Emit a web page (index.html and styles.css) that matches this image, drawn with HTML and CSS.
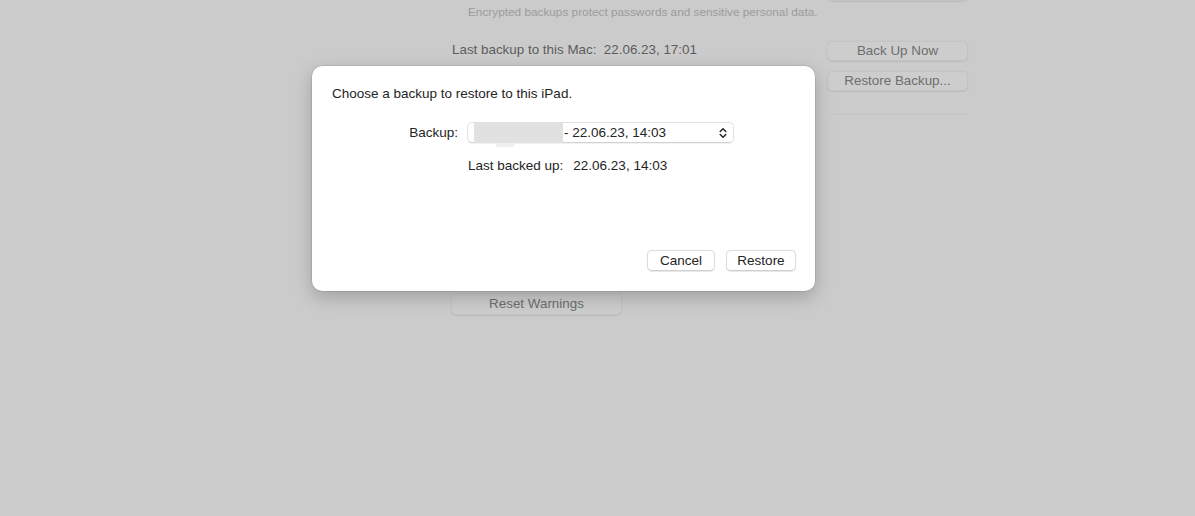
FILE: index.html
```html
<!DOCTYPE html>
<html>
<head>
<meta charset="utf-8">
<link rel="stylesheet" href="styles.css">
</head>
<body>
<div class="page">
  <div class="grid">
    <div class="cell"></div>
    <div class="cell"><div class="btn top-btn"></div></div>

    <div class="cell note">Encrypted backups protect passwords and sensitive personal data.</div>
    <div class="cell"></div>

    <div class="cell last">Last backup to this Mac:&nbsp; 22.06.23, 17:01</div>
    <div class="cell"><div class="btn gap">Back Up Now</div></div>

    <div class="cell"></div>
    <div class="cell"><div class="btn gap">Restore Backup...</div></div>

    <div class="cell"></div>
    <div class="cell"><div class="sep"></div></div>
  </div>
  <div class="reset-row"><div class="btn reset">Reset Warnings</div></div>
</div>

<div class="dialog">
  <p class="title">Choose a backup to restore to this iPad.</p>
  <div class="form">
    <span class="label">Backup:</span>
    <div class="popup">
      <span class="redact"><span class="redact-tail"></span></span>
      <span class="popup-text">- 22.06.23, 14:03</span>
      <svg class="chev" width="8" height="12" viewBox="0 0 8 12"><path d="M1.2 4.6 L4 1.8 L6.8 4.6 M1.2 7.4 L4 10.2 L6.8 7.4" fill="none" stroke="#222" stroke-width="1.4" stroke-linecap="round" stroke-linejoin="round"/></svg>
    </div>
    <div class="info">
      <span class="info-label">Last backed up:</span>
      <span class="info-value">22.06.23, 14:03</span>
    </div>
  </div>
  <div class="actions">
    <div class="dbtn cancel">Cancel</div>
    <div class="dbtn restore">Restore</div>
  </div>
</div>
</body>
</html>
```

FILE: styles.css
```css
html, body {
  margin: 0;
  padding: 0;
}
body {
  background: #cbcbcb;
  font-family: "Liberation Sans", Arial, sans-serif;
  width: 1195px;
  height: 516px;
  overflow: hidden;
  position: relative;
}
.page {
  padding-left: 451px;
}
.grid {
  display: grid;
  grid-template-columns: 376px 141px;
}
.btn {
  box-sizing: border-box;
  height: 20px;
  border: 1px solid #c4c4c4;
  border-radius: 5px;
  background: #cdcdcd;
  color: #6e6e6e;
  font-size: 13.4px;
  line-height: 18px;
  text-align: center;
  box-shadow: 0 0.5px 1px rgba(0,0,0,0.08);
}
.top-btn {
  margin-top: -19px;
}
.gap {
  margin-bottom: 10px;
}
.note {
  padding-left: 17px;
  padding-top: 5px;
  font-size: 11.8px;
  line-height: 13px;
  color: #9c9c9c;
  height: 35px;
  white-space: nowrap;
}
.last {
  padding-top: 1px;
  padding-left: 1px;
  font-size: 13.4px;
  line-height: 16px;
  color: #5c5c5c;
}
.sep {
  margin-top: 13px;
  margin-left: 3px;
  height: 1px;
  background: #c2c2c2;
}
.reset-row {
  padding-top: 178px;
}
.reset {
  width: 171px;
  height: 22px;
  line-height: 20px;
}

.dialog {
  position: absolute;
  left: 312px;
  top: 66px;
  width: 503px;
  height: 225px;
  box-sizing: border-box;
  background: #ffffff;
  border-radius: 10px;
  box-shadow: 0 0 0 0.5px rgba(0,0,0,0.15), 0 6px 18px rgba(0,0,0,0.22);
  padding: 20px 19px 0 20px;
  display: flex;
  flex-direction: column;
  color: #242424;
  font-size: 13.5px;
}
.title {
  margin: 0;
  line-height: 16px;
}
.form {
  display: grid;
  grid-template-columns: 126px 267px;
  column-gap: 9px;
  row-gap: 15px;
  align-items: center;
  margin-top: 20px;
  line-height: 16px;
}
.label {
  text-align: right;
}
.popup {
  box-sizing: border-box;
  height: 21px;
  border-radius: 5px;
  border: 1px solid #e2e2e2;
  border-bottom-color: #d2d2d2;
  display: flex;
  align-items: center;
  box-shadow: 0 0.5px 1px rgba(0,0,0,0.06);
}
.redact {
  position: relative;
  margin-left: 6px;
  width: 89px;
  height: 20px;
  background: #e1e1e1;
  flex: none;
}
.redact-tail {
  position: absolute;
  left: 22px;
  top: 20px;
  width: 18px;
  height: 4px;
  background: #efefef;
}
.popup-text {
  margin-left: 1px;
  flex: 1;
}
.chev {
  margin-right: 6px;
}
.info {
  grid-column: 2;
  display: flex;
  gap: 10px;
  padding-left: 1px;
}
.actions {
  margin-top: auto;
  margin-bottom: 20px;
  display: flex;
  justify-content: flex-end;
  gap: 11px;
}
.dbtn {
  box-sizing: border-box;
  height: 21px;
  line-height: 19px;
  border: 1px solid #dcdcdc;
  border-bottom-color: #cfcfcf;
  border-radius: 5px;
  background: #fff;
  color: #242424;
  font-size: 13.5px;
  text-align: center;
  box-shadow: 0 0.5px 1px rgba(0,0,0,0.1);
}
.cancel { width: 68px; }
.restore { width: 70px; }
```
